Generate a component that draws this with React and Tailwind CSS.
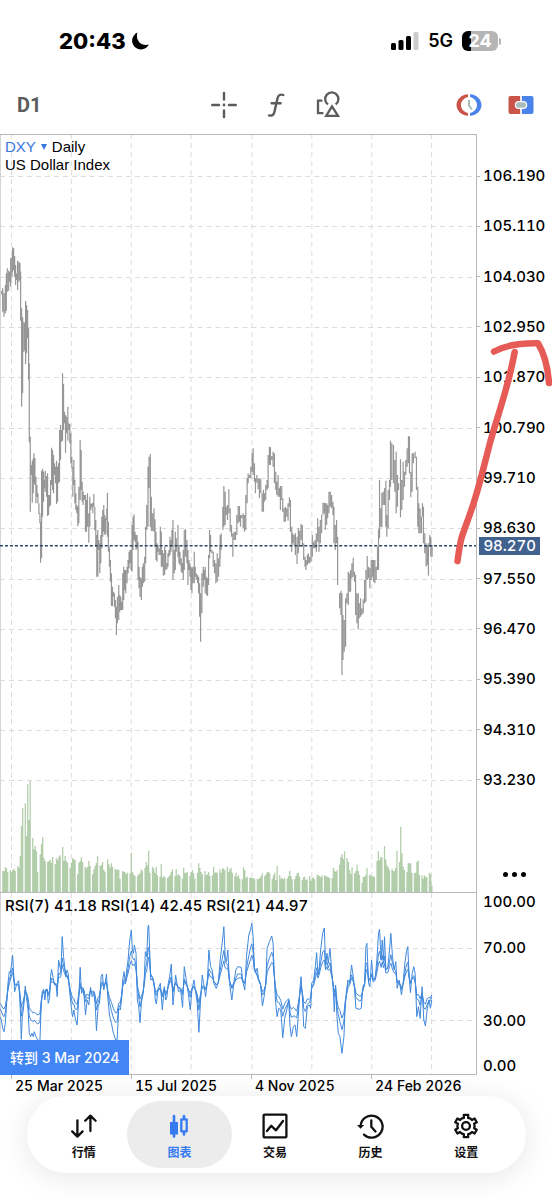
import React from 'react';

// Chart series use three units per pixel; each price entry is "x high low".
const PRICE_FIRST = `5 183 193,8 175 245,12 190 260,16 165 250,19 130 242,22 115 185,26 122 182,29 125 155,32 85 170,36 80 140,38 52 125,41 55 120,44 78 140,47 105 165,50 130 150,53 92 180,57 95 155,60 100 150,62 125 272,65 235 530,68 262 490,72 275 365,74 280 360,77 213 402,80 225 370,83 240 325,86 295 450,88 400 637,91 620 845,94 705 735,97 692 818,100 685 790,102 670 760,105 685 765,108 740 820,111 765 800,114 790 820,117 820 852,120 850 880,122 875 998,125 722 985,128 716 860,131 725 815,134 750 775,136 722 785,140 738 800,143 730 858,146 795 855,149 795 830,152 750 825,155 653 765,158 660 780,161 675 790,164 700 735,167 710 760,170 692 822,173 710 815,176 700 760,179 600 755,182 585 690,185 600 635,188 430 632,191 462 600,194 545 580,197 555 668,200 560 610,204 530 632,207 580 600,210 582 640,213 610 700,216 680 715,219 710 800,222 690 765,225 750 820,228 790 840,231 825 850,234 830 888,237 770 880,241 630 810,244 660 780,247 755 815,250 785 825,254 795 810,257 795 905,260 810 905,263 790 890,267 850 938,270 800 890,273 820 840,276 822 832,279 818 850,282 792 830,285 830 900,288 870 950,291 915 1040,294 900 1040,297 930 960,300 940 1030,303 915 1000,306 860 955,309 840 920,312 825 905,315 855 915,318 865 912,321 835 870,323 788 920,326 875 965,329 950 1010,332 990 1055,335 1030 1128,338 1070 1128,341 1085 1100,344 1090 1130,347 1110 1165,350 1130 1215,353 1100 1180,357 1065 1170,360 1095 1145,363 1100 1140,366 1115 1140,369 1030 1140,372 1010 1110,375 1020 1080,378 1020 1090,382 1010 1060,385 990 1030,388 965 1015,391 960 1000,394 960 1020,397 885 1025,400 860 960,403 853 930,406 905 935,409 915 960,412 915 955,415 935 1050,418 1010 1075,421 1040 1100,425 1045 1110,428 1010 1070,431 1000 1060,435 980 1055,438 890 1000,441 825 900,445 710 890,448 680 775,452 672 890,455 800 903,459 850 903,463 835 905,466 868 950,469 905 990,472 940 995,475 945 965,478 955 975,482 890 975,485 905 1010,488 960 1010,491 970 1037,495 950 1035,498 960 1020,502 1000 1018,505 970 1010,508 960 980,511 920 975,514 930 965,517 900 950,520 870 1050,524 960 1030,527 905 1020,530 925 965,535 885 980,538 945 1000,541 965 1005,545 985 1025,548 1000 1030,551 960 1050,554 900 1020,558 898 980,562 930 1000,565 960 1065,568 990 1020,571 1000 1040,574 1010 1080,577 1015 1090,580 1010 1060,584 965 1060,587 1010 1040,590 1030 1050,594 1035 1060,597 1040 1090,600 1060 1160,603 1090 1235,607 1030 1150,611 1010 1070,614 1020 1050,617 1010 1090,621 1040 1095,624 1045 1098,627 975 1065,630 900 985,633 915 965,637 960 970,641 965 1010,645 990 1030,649 1000 1060,653 970 1055,657 985 1040,661 950 1010`;

const PRICE_SECOND = `2 405 475,5 400 450,10 320 390,13 258 380,17 275 375,20 320 345,24 315 360,28 268 340,32 325 395,36 375 410,40 400 470,44 395 420,48 395 420,52 345 405,56 318 370,60 318 365,63 345 380,67 345 355,71 340 385,75 345 395,79 285 390,83 235 310,86 220 250,90 225 235,94 200 235,98 160 215,101 145 225,105 190 245,108 235 280,112 225 248,116 235 268,120 235 295,124 238 280,128 280 335,132 270 335,135 280 305,139 255 300,143 240 270,146 165 265,150 140 195,153 142 195,157 168 180,161 155 200,165 160 250,169 215 270,172 245 285,176 225 290,180 265 290,183 258 330,187 258 300,190 295 335,194 325 365,198 320 365,202 325 350,206 310 362,210 292 320,213 300 395,217 380 455,220 400 430,224 405 435,228 400 465,233 410 492,237 385 460,241 392 440,245 372 420,249 375 440,253 430 480,257 470 500,260 480 510,264 465 495,267 460 490,271 470 490,275 440 485,279 405 470,283 425 445,287 420 445,291 400 455,295 355 425,299 380 455,303 360 430,307 345 400,311 308 345,315 308 340,318 310 390,322 310 375,325 315 355,329 275 340,333 275 320,337 285 325,341 305 345,344 320 430,348 375 450,352 360 430,355 410 555,361 580 625,365 572 645,368 580 825,371 645 780,375 660 755,379 595 740,383 580 610,387 515 615,390 520 575,394 510 575,398 490 535,402 473 530,406 515 545,409 525 645,413 580 670,417 580 688,420 610 655,424 595 650,428 625 645,432 598 640,436 540 610,440 510 605,444 468 540,448 500 535,452 505 565,456 480 540,460 480 530,463 480 545,467 480 550,471 500 540,475 440 510,478 388 510,481 240 415,485 325 380,488 278 382,492 275 315,496 265 315,500 242 380,503 345 410,507 270 385,511 240 300,514 122 260,518 130 240,523 135 250,527 180 275,531 155 340,535 225 320,538 250 270,544 178 352,548 240 330,552 185 300,556 215 260,560 180 225,564 145 200,568 108 190,571 110 220,575 215 292,579 160 275,583 160 190,588 155 175,592 170 270,596 260 380,599 310 400,603 325 400,607 350 400,610 310 350,613 320 430,617 400 460,621 430 500,625 435 495,628 430 527,632 405 440,635 410 470,639 435 470`;

// One row of five daily volumes per trading week
const VOLUME = `65 65 76 73 62|68 62 68 72 65|80 75 110 200 255|268 170 325 218 336|165 130 140 125 62|115 145 167 105 95|92 95 98 90 107|85 103 98 108 112|138 95 110 95 90|75 90 103 100 98|55 90 95 106 92|78 73 78 95 80|55 70 80 88 110|80 83 92 68 63|100 85 75 88 78|72 68 70 68 42|65 63 62 55 60|58 120 62 55 50|50 55 58 70 65|75 92 82 126 60|78 72 60 78 52|48 85 45 50 46|45 48 52 62 70|50 70 52 55 50|42 75 60 58 62|50 62 68 58 42|60 88 74 62 55|65 52 55 62 50|52 78 60 62 58|70 60 72 73 68|78 62 70 75 60|50 60 48 52 42|40 76 68 45 48|44 46 44 44 40|42 40 44 50 58|50 55 62 62 58|42 52 60 38 80|52 42 44 40 44|42 50 66 50 40|40 50 58 60 48|38 46 48 38 40|50 36 44 46 40|54 52 50 46 52|52 50 48 46 44|44 75 66 62 68|84 106 116 102 124|104 92 68 56 76|58 64 84 66 54|30 48 46 52 74|52 54 48 50 46|94 124 98 106 106|140 100 82 76 68|70 66 64 74 126|92 198 118 78 68|62 88 88 88 60|58 60 92 96 54|52 42 52 48 46|60 55 20`;

const RSI_FIRST = `0 740,4 750,8 775,12 785,16 760,20 700,24 640,28 605,31 608,34 590,38 556,41 610,44 665,48 650,52 640,56 632,59 680,62 740,64 808,67 740,70 720,73 690,76 648,79 680,82 700,85 730,88 790,92 800,96 790,100 800,103 785,108 800,114 810,120 815,124 700,127 665,131 658,135 690,138 665,142 658,145 700,149 685,152 620,155 598,160 625,164 645,168 640,172 680,176 570,180 590,183 600,187 500,191 560,194 585,198 620,201 600,205 610,209 660,213 700,218 740,222 720,226 745,232 765,237 680,241 592,245 670,249 660,253 680,257 735,262 690,267 705,272 652,277 680,282 670,286 700,290 782,295 710,299 700,304 620,308 612,312 660,316 640,320 612,324 680,329 735,335 760,341 790,348 810,352 810,357 715,362 720,366 680,369 630,373 605,377 640,381 600,385 570,390 510,395 480,398 540,401 550,404 525,409 550,413 690,417 710,421 758,425 700,430 670,434 620,437 545,441 560,445 470,447 465,450 540,453 630,459 625,463 640,467 690,470 702,475 660,482 640,488 720,494 650,498 690,502 680,506 640,510 620,515 582,520 705,524 660,528 615,532 640,537 665,543 660,549 712,554 590,560 630,566 670,572 720,577 660,583 630,588 665,593 700,598 787,603 690,608 615,612 640,618 680,623 640,628 540,633 590,638 600,643 640,650 655,656 640,662 570,668 520,673 470,677 560,681 575,685 540,690 640,697 690,703 640,709 600,715 590,725 592,731 640,736 660,741 560,748 495,753 480,757 460,761 500,765 600,769 605,773 595,778 630,783 640,789 708,794 680,799 640,803 535,810 515`;

const RSI_SECOND = `7 498,11 520,14 600,18 690,23 740,28 715,34 720,40 803,46 745,52 720,58 690,62 770,66 800,72 770,77 765,82 800,88 720,92 650,95 620,99 680,103 770,108 775,114 710,120 705,124 715,127 640,133 630,138 590,142 548,146 615,150 590,154 540,160 490,165 474,169 590,173 550,177 580,182 535,187 600,192 660,195 725,199 645,203 740,207 790,212 800,218 850,224 800,228 700,232 660,236 630,241 640,247 585,252 620,256 660,260 715,270 718,276 715,281 650,286 640,290 530,293 520,298 640,302 650,307 570,312 630,318 625,323 570,328 490,331 478,336 570,339 510,343 570,346 500,350 600,356 590,361 540,365 490,370 560,375 600,380 575,384 655,390 630,397 675,402 640,407 580,412 545,416 530,420 620,424 668,429 610,434 590,438 610,443 740,448 710,453 745,459 650,464 750,469 768,474 720,480 690,484 715,488 690`;

const parse = (s) => s.split(',').map((p) => p.split(' ').map(Number));

const priceBars = [
  ...parse(PRICE_FIRST).map(([x, h, l]) => [x, h + 690, l + 690]),
  ...parse(PRICE_SECOND).map(([x, h, l]) => [x + 660, h + 1200, l + 1200]),
];

const pricePath = priceBars.map(([x, h, l]) => `M${x} ${h}V${l}`).join('');

const volumePath = VOLUME.split('|')
  .map((week, w) =>
    week
      .split(' ')
      .map((v, d) => `M${8.5 + w * 22.5 + d * 3.7} 2678V${2678 - v}`)
      .join('')
  )
  .join('');

const rsi7 = [...parse(RSI_FIRST), ...parse(RSI_SECOND).map(([x, y]) => [x + 810, y])];

const smoothRsi = (pull, span) =>
  rsi7.map(([x], i) => {
    const part = rsi7.slice(Math.max(0, i - span), i + 2);
    const mean = part.reduce((sum, p) => sum + p[1], 0) / part.length;
    const mixed = mean * 0.5 + rsi7[i][1] * 0.5;
    return [x, 648 + (mixed - 648) * pull];
  });

const toLine = (points) => 'M' + points.map(([x, y]) => `${x} ${y + 2310}`).join('L');

const rsiLines = [rsi7, smoothRsi(0.72, 2), smoothRsi(0.55, 3)].map(toLine);

const GRID_X = [11, 71, 131, 191, 252, 312, 372, 432];
const PRICES = ['106.190', '105.110', '104.030', '102.950', '101.870', '100.790', '99.710', '98.630', '97.550', '96.470', '95.390', '94.310', '93.230'];
const GRID_Y = PRICES.map((_, i) => Math.round(176 + i * 50.35));
const DATES = ['25 Mar 2025', '15 Jul 2025', '4 Nov 2025', '24 Feb 2026'];

const gearPath = () => {
  const pts = [];
  for (let i = 0; i < 6; i++) {
    [[-27, 8.6], [-15, 8.4], [-11, 11.4], [11, 11.4], [15, 8.4], [27, 8.6]].forEach(([a, r]) => {
      const t = ((i * 60 + a) * Math.PI) / 180;
      pts.push(`${(14 + r * Math.sin(t)).toFixed(2)} ${(14 - r * Math.cos(t)).toFixed(2)}`);
    });
  }
  return `M${pts.join('L')}Z`;
};

const StatusBar = () => (
  <div className="flex h-[82px] items-center justify-between pr-[51px] pl-[59px]">
    <div className="flex items-center gap-[5px]">
      <span className="text-[22px] leading-7 font-extrabold">20:43</span>
      <svg width="18" height="18" viewBox="0 0 18 18" fill="#000">
        <path d="M6.4 .6A8.800 8.800 0 1 0 17.800 12.600C10.500 14.800 4.200 8.800 6.400 .6Z" />
      </svg>
    </div>
    <div className="flex items-center gap-[9px]">
      <svg width="28" height="18" viewBox="0 0 28 18">
        <rect x="0" y="11" width="5" height="7" rx="1.5" />
        <rect x="7.5" y="8" width="5" height="10" rx="1.5" />
        <rect x="15" y="4" width="5" height="14" rx="1.5" />
        <rect x="22.5" y="0" width="5" height="18" rx="1.5" fill="#ccc" />
      </svg>
      <span className="text-lg leading-6 font-semibold">5G</span>
      <div className="flex items-center gap-px">
        <div className="flex h-5 w-9 items-center justify-center rounded-md bg-linear-to-r from-black from-25% to-[#b5b5b5] to-25% text-[18px] leading-5 font-bold text-white">
          24
        </div>
        <div className="h-[7px] w-[2px] rounded-r-sm bg-[#b5b5b5]" />
      </div>
    </div>
  </div>
);

const Toolbar = () => (
  <div className="mb-[6px] grid h-[46px] grid-cols-[1fr_auto_1fr] items-center px-[17px]">
    <button className="justify-self-start font-['Liberation_Sans_Narrow',Roboto,sans-serif] text-[20px] leading-6 font-bold text-[#5c5c5c]">D1</button>
    <div className="flex gap-6">
      <button aria-label="Crosshair">
        <svg width="28" height="28" viewBox="0 0 28 28" fill="none" stroke="#5c5c5c" strokeWidth="2.400" strokeLinecap="round">
          <path d="M2.200 14H9M19 14H25.800M14 2V8.600M14 19.400V26" />
          <circle cx="14" cy="14" r="1.400" fill="#5c5c5c" stroke="none" />
        </svg>
      </button>
      <button aria-label="Indicators">
        <svg width="28" height="28" viewBox="0 0 28 28" fill="none" stroke="#5c5c5c" strokeWidth="2.400" strokeLinecap="round">
          <path d="M21.300 4C18.500 2.900 16.200 4.200 15.600 7L12.400 21C11.800 24 9.600 25.200 7 24.400M9.600 12.200H18.600" />
        </svg>
      </button>
      <button aria-label="Objects">
        <svg width="28" height="28" viewBox="0 0 28 28" fill="none" stroke="#5c5c5c" strokeWidth="2.300">
          <path d="M8.400 9.600H4V22.200H9.400" />
          <path d="M14 13.400A6.600 6.600 0 1 1 21.600 13.400" />
          <path d="M18 15.400L12.200 24.800H24Z" />
        </svg>
      </button>
    </div>
    <div className="flex gap-6 justify-self-end">
      <button aria-label="Pending order">
        <svg width="28" height="28" viewBox="0 0 28 28" fill="none">
          <path d="M13 3.200C6.500 3.700 1.500 8.200 1.500 14C1.500 19.800 6.500 24.300 13 24.800V22C9 21 6 18 6 14C6 10 9 7 13 6Z" fill="#c9554a" />
          <path d="M15 3.200C21.500 3.700 26.500 8.200 26.500 14C26.500 19.800 21.500 24.300 15 24.800V22C19 21 22 18 22 14C22 10 19 7 15 6Z" fill="#4a83ea" />
          <path d="M14 9V14.600L17 18.500" stroke="#a9bcbd" strokeWidth="2" />
        </svg>
      </button>
      <button aria-label="One click trading">
        <svg width="28" height="28" viewBox="0 0 28 28">
          <path d="M3.500 5H13.500V23H3.500A2 2 0 0 1 1.500 21V7A2 2 0 0 1 3.500 5Z" fill="#c9554a" />
          <path d="M14.500 5H24.500A2 2 0 0 1 26.500 7V21A2 2 0 0 1 24.500 23H14.500Z" fill="#4a83ea" />
          <rect x="13.300" y="5" width="1.400" height="18" fill="#fff" />
          <rect x="7.800" y="10" width="12.400" height="8" rx="4" fill="#fff" />
          <rect x="9" y="11.300" width="10" height="5.400" rx="2.700" fill="#a9bcbd" />
        </svg>
      </button>
    </div>
  </div>
);

const PricePanel = () => (
  <div className="flex">
    <div className="relative min-w-0 flex-1 border-r border-[#b8b8b8]">
      <svg className="block h-[759px] w-full" viewBox="0 134 477 759" preserveAspectRatio="none" fill="none">
        <g stroke="#dcdcdc" strokeDasharray="5 4">
          {GRID_X.map((x) => <path key={x} d={`M${x + 0.5} 134V893`} />)}
          {GRID_Y.map((y) => <path key={y} d={`M0 ${y + 0.5}H477`} />)}
        </g>
        <path d="M.5 134V893" stroke="#d4d4d4" />
        <g transform="scale(.33333)">
          <path d={volumePath} stroke="#b1cdaa" strokeWidth="3.800" />
          <path d={pricePath} stroke="#969696" strokeWidth="3.600" />
        </g>
        <path d="M0 134.500H477" stroke="#b8b8b8" />
        <path d="M0 893H477" stroke="#b8b8b8" strokeWidth="2" />
        <path d="M0 545.750H477" stroke="#2b4868" strokeWidth="1.500" strokeDasharray="3 2" />
      </svg>
      <div className="absolute top-1 left-[5px] font-['Liberation_Sans',Arial,sans-serif] text-[15px] leading-[18px]">
        <button className="flex items-center gap-[5px]">
          <span className="text-[#3a76e0]">DXY</span>
          <svg width="6" height="6" viewBox="0 0 6 6" fill="#3a76e0"><path d="M0 0H6L3 6Z" /></svg>
          <span>Daily</span>
        </button>
        <p>US Dollar Index</p>
      </div>
    </div>
    <div className="w-[75px] pt-8">
      <ul className="flex h-[624px] flex-col justify-between text-[15px] leading-5 font-medium tabular-nums">
        {PRICES.map((p) => (
          <li key={p} className="flex items-center gap-[3px] whitespace-nowrap">
            <span className="h-px w-[3px] bg-[#b8b8b8]" />
            {p}
          </li>
        ))}
      </ul>
      <button aria-label="More" className="mt-[72px] ml-[26px] flex h-6 items-center gap-1">
        <span className="size-[5px] rounded-full bg-black" />
        <span className="size-[5px] rounded-full bg-black" />
        <span className="size-[5px] rounded-full bg-black" />
      </button>
    </div>
  </div>
);

const RsiPanel = () => (
  <div className="flex">
    <div className="relative min-w-0 flex-1 border-r border-[#b8b8b8]">
      <svg className="block h-[182px] w-full" viewBox="0 893 477 182" preserveAspectRatio="none" fill="none">
        <g stroke="#dcdcdc" strokeDasharray="5 4">
          {GRID_X.map((x) => <path key={x} d={`M${x + 0.5} 893V1075`} />)}
          <path d="M0 948.500H477M0 1020.500H477" />
        </g>
        <path d="M.5 893V1075" stroke="#d4d4d4" />
        <path d="M0 1074.500H477" stroke="#b8b8b8" />
        <g transform="scale(.33333)" stroke="#3f88dc" strokeWidth="3" strokeLinejoin="round">
          {rsiLines.map((d, i) => <path key={i} d={d} />)}
        </g>
      </svg>
      <p className="absolute top-1 left-[5px] text-[15px] leading-[18px] font-medium whitespace-nowrap tabular-nums">
        RSI(7) 41.18 RSI(14) 42.45 RSI(21) 44.97
      </p>
      <button className="absolute bottom-0 left-0 h-[35px] bg-[#4285f4] px-[10px] text-sm font-medium whitespace-nowrap text-white">
        转到 3 Mar 2024
      </button>
    </div>
    <ul className="w-[75px] pl-[6px] text-[15px] leading-[18px] font-medium tabular-nums">
      <li>100.00</li>
      <li className="mt-7">70.00</li>
      <li className="mt-[55px]">30.00</li>
      <li className="mt-[27px]">0.00</li>
    </ul>
  </div>
);

const DrawnArrow = () => (
  <svg className="pointer-events-none absolute top-[200px] right-0" width="102" height="236" viewBox="450 334 102 236" fill="none" stroke="#e65b56" strokeWidth="6.500" strokeLinecap="round" strokeLinejoin="round">
    <path d="M514.700 352C512.500 363 510 375 506.500 387C502 404 496 422 490.500 441C485 462 480 483 474 502C470 515 465 527 461.500 538C459.500 546 458.500 554 457.500 561" />
    <path d="M494 351.500C505 345.500 519 343 538 343.300C544 353 547.500 364 549 383" />
  </svg>
);

const TABS = [
  {
    label: '行情',
    icon: <path d="M7.400 8.500V24.500M2.200 19.400L7.400 24.600L12.600 19.400M20.400 19V3.600M15.200 8.800L20.400 3.600L25.600 8.800" />,
  },
  {
    label: '图表',
    active: true,
    icon: (
      <>
        <path d="M9 4V24.500" strokeWidth="2.600" />
        <rect x="5" y="10" width="8" height="12.500" fill="currentColor" stroke="none" />
        <path d="M19 4V7M19 20V22.500" strokeWidth="2.600" />
        <rect x="16.300" y="7.300" width="5.400" height="12" />
      </>
    ),
  },
  {
    label: '交易',
    icon: (
      <>
        <rect x="2.600" y="2.600" width="22.800" height="22.800" rx="1" />
        <path d="M6 19L10.300 13.800L15 18.300L22 9" />
      </>
    ),
  },
  {
    label: '历史',
    icon: (
      <>
        <path d="M3.600 14A11 11 0 1 1 7 22.600" />
        <path d="M0 13H7.200L3.600 16.800Z" fill="currentColor" stroke="none" />
        <path d="M14.300 8.500V14.800L18.500 19.500" />
      </>
    ),
  },
  {
    label: '设置',
    icon: (
      <>
        <path d={gearPath()} />
        <circle cx="14" cy="14" r="3.900" />
      </>
    ),
  },
];

const TabBar = () => (
  <nav className="mr-[26px] ml-[27px] flex h-[77px] items-center rounded-[38px] bg-white pr-[12px] pl-[9px] shadow-[0_4px_30px_rgba(0,0,0,0.10)]">
    {TABS.map((tab) => (
      <button
        key={tab.label}
        className={`-mx-[5px] flex h-[67px] flex-1 flex-col items-center gap-1 rounded-[34px] pt-[11px] ${tab.active ? 'bg-[#ececed] text-[#367cf0]' : 'text-[#111]'}`}
      >
        <svg width="28" height="28" viewBox="0 0 28 28" fill="none" stroke="currentColor" strokeWidth="2.300" strokeLinejoin="round" strokeLinecap="round">
          {tab.icon}
        </svg>
        <span className="text-xs leading-[18px] font-bold">{tab.label}</span>
      </button>
    ))}
  </nav>
);

const App = () => (
  <div className="min-h-screen overflow-hidden bg-white font-[Inter,'Noto_Sans_CJK_SC',sans-serif] text-black">
    <StatusBar />
    <Toolbar />
    <main className="relative">
      <PricePanel />
      <RsiPanel />
      <div className="absolute top-[403px] right-[12px] bg-[#41628f] px-1 text-[15px] leading-[18px] font-medium text-white tabular-nums">98.270</div>
      <DrawnArrow />
    </main>
    <div className="flex h-[21px] pl-[11px]">
      {DATES.map((d) => (
        <div key={d} className="flex w-[120px] shrink-0 gap-[3px] text-sm leading-[22px] font-medium whitespace-nowrap tabular-nums">
          <span className="h-1 w-px bg-[#b8b8b8]" />
          {d}
        </div>
      ))}
    </div>
    <TabBar />
  </div>
);

export default App;
